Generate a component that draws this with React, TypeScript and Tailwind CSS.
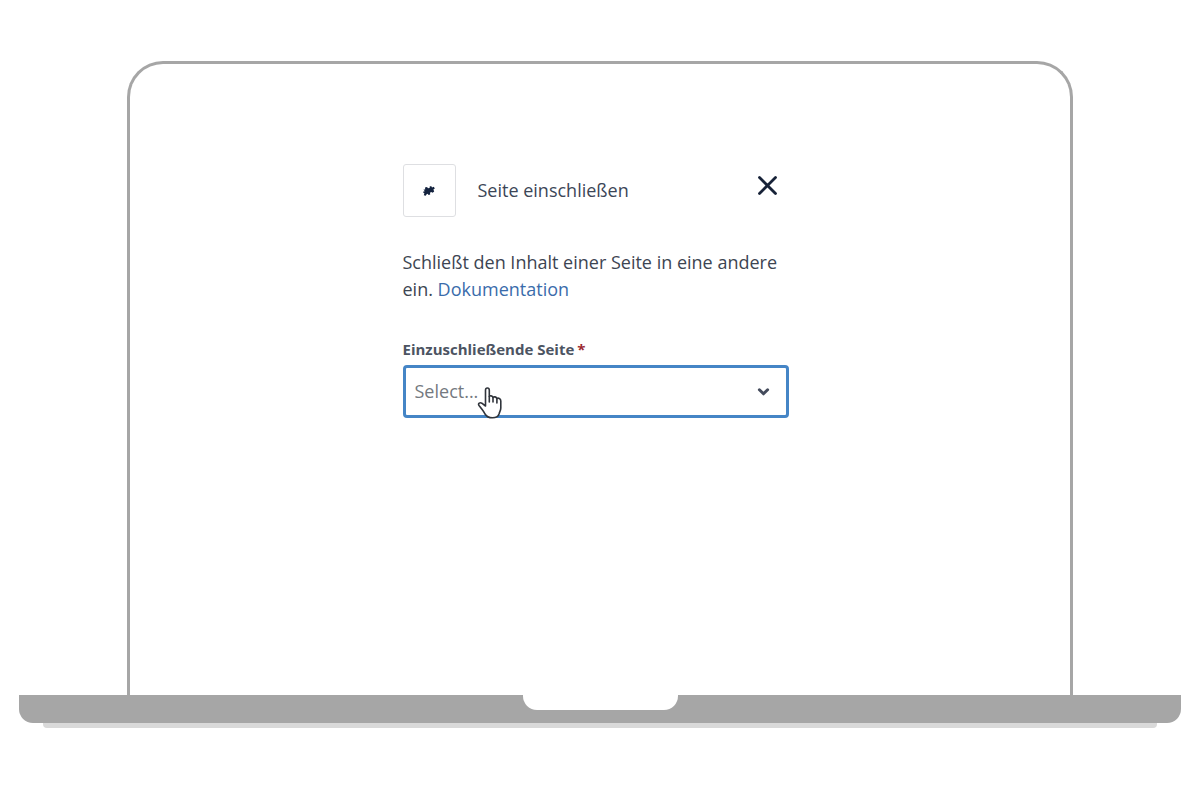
import React from "react";

const MacroIcon: React.FC = () => (
    <svg width="12" height="10" viewBox="0 0 12 10" fill="#14233f" aria-hidden="true">
        <path d="M0.5 3.6 L2.2 3.4 L2 1.6 L4 0.9 L5 2.2 L6.6 1.9 L6.8 0.3 L8.4 0.2 L9 1.4 L10.8 0.8 L11.8 2.4 L10.4 3.6 L11.2 5.4 L9.6 6.8 L8.2 5.9 L7 6.8 L7.2 8.4 L5.6 9 L4.6 7.8 L3.4 8.4 L2.8 9.8 L0.8 9.2 L1.4 7.2 L0.1 6.6 L0.4 5.4 L1.8 5.2 Z" />
    </svg>
);

const HandCursor: React.FC = () => (
    <svg
        className="pointer-events-none absolute left-[74px] top-[21px]"
        width="26"
        height="34"
        viewBox="0 0 26 34"
        fill="#ffffff"
        stroke="#30343b"
        strokeWidth="1.6"
        strokeLinejoin="round"
        strokeLinecap="round"
        aria-hidden="true"
    >
        <path d="M8.5 20 V4.2 C8.5 1.2 12.3 1.2 12.3 4.2 V10.5 C12.9 9.5 15.4 9.4 16 11.5 C17 10.4 19.3 10.6 19.9 12.6 C21.2 11.7 23.8 12.3 23.8 15 V22 C23.8 24.5 22.5 26 22 28 C21 31 18.5 31.8 15.5 31.8 C11.5 31.8 9.5 30.5 8 28 C6.5 25 4.5 22.5 2 19.5 C0.7 17.6 3 16.1 4.8 17.2 Z" />
        <path d="M12.3 10.5 V16 M16 11.5 V16 M19.9 12.6 V17" fill="none" />
    </svg>
);

const MacroPanel: React.FC = () => {
    return (
        <div className="w-full max-w-[386px]">
            <div className="flex items-start">
                <div className="flex h-[53px] w-[53px] items-center justify-center rounded-[3px] border border-[#dedfe2]">
                    <MacroIcon />
                </div>
                <h1 className="ml-[22px] self-center text-[18px] leading-[27px] text-[#3c4657]">Seite einschließen</h1>
                <button type="button" aria-label="Schließen" className="ml-auto mr-[11px] mt-[11px]">
                    <svg width="21" height="21" viewBox="0 0 21 21" fill="none" stroke="#172238" strokeWidth="2.8" strokeLinecap="round" aria-hidden="true">
                        <path d="M2.5 2.5 L18.5 18.5 M18.5 2.5 L2.5 18.5" />
                    </svg>
                </button>
            </div>
            <p className="mt-8 text-[18px] leading-[27px] text-[#3d4552]">
                Schließt den Inhalt einer Seite in eine andere ein.{" "}
                <a href="#dokumentation" className="text-[#3a6cab]">Dokumentation</a>
            </p>
            <label htmlFor="page" className="mt-[34px] block text-[15px] leading-6 font-bold text-[#4c5462]">
                Einzuschließende Seite<span className="ml-[3px] text-[#9c2b32]">*</span>
            </label>
            <div className="relative mt-1">
                <select
                    id="page"
                    defaultValue=""
                    required
                    className="block h-[53px] w-full appearance-none rounded-[4px] border-[3px] border-[#4585c6] bg-white pl-[9px] pr-10 text-[18px] text-[#747980] outline-none"
                >
                    <option value="">Select...</option>
                </select>
                <svg className="pointer-events-none absolute right-[19px] top-[22px]" width="13" height="10" viewBox="0 0 13 10" fill="none" stroke="#444b5c" strokeWidth="3" strokeLinecap="round" strokeLinejoin="round" aria-hidden="true">
                    <path d="M2.4 2.8 L6.5 6.8 L10.6 2.8" />
                </svg>
                <HandCursor />
            </div>
        </div>
    );
};

export default function App() {
    return (
        <main className="min-h-screen bg-white px-[19px] pt-[61px] pb-16 font-['Open_Sans','Noto_Sans',sans-serif]">
            <div className="mx-[108px] flex min-h-[634px] justify-center rounded-t-[36px] border-[3px] border-b-0 border-[#a6a6a6] pt-[100px] pr-[9px] pb-10">
                <MacroPanel />
            </div>
            <div className="flex h-7 justify-center rounded-b-[14px] bg-[#a6a6a6]">
                <div className="h-[15px] w-[155px] rounded-b-[14px] bg-white" />
            </div>
            <div className="mx-6 h-[5px] rounded-b-[4px] bg-[#d9d9d9]" />
        </main>
    );
}
